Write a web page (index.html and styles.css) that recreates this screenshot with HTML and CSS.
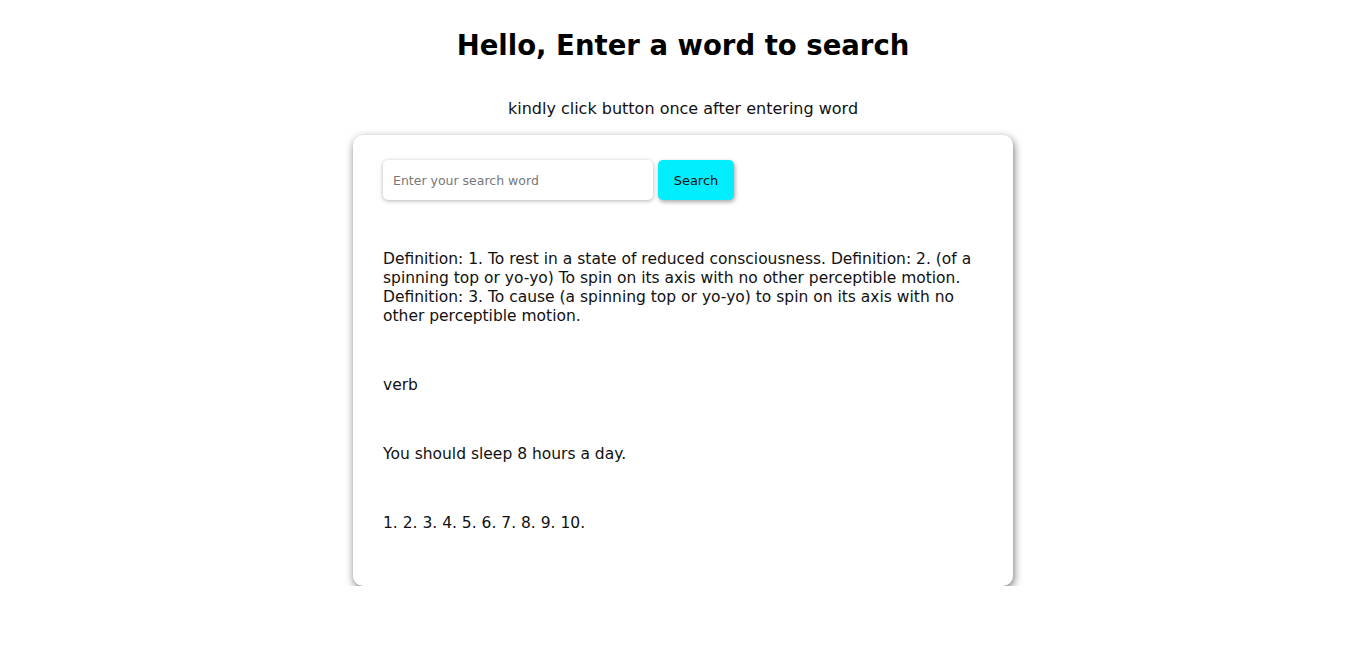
FILE: index.html
```html
<!DOCTYPE html>
<html>
<head>
<meta charset="utf-8">
<link rel="stylesheet" href="styles.css">
</head>
<body>
<h1 class="title">Hello, Enter a word to search</h1>
<p class="hint">kindly click button once after entering word</p>
<div class="card">
  <div class="search-row">
    <input class="search-input" type="text" placeholder="Enter your search word">
    <button class="search-btn">Search</button>
  </div>
  <div class="results">
    <p class="result">Definition: 1. To rest in a state of reduced consciousness. Definition: 2. (of a spinning top or yo-yo) To spin on its axis with no other perceptible motion. Definition: 3. To cause (a spinning top or yo-yo) to spin on its axis with no other perceptible motion.</p>
    <p class="result">verb</p>
    <p class="result">You should sleep 8 hours a day.</p>
    <p class="result">1. 2. 3. 4. 5. 6. 7. 8. 9. 10.</p>
  </div>
</div>
</body>
</html>
```
FILE: styles.css
```css
html, body {
  margin: 0;
  padding: 0;
  background: #ffffff;
}
body {
  font-family: "DejaVu Sans", sans-serif;
  color: #111;
  display: flex;
  flex-direction: column;
  align-items: center;
}
.title {
  font-size: 27.5px;
  font-weight: bold;
  margin: 26px 0 0;
  line-height: 38px;
  color: #000;
}
.hint {
  font-size: 16px;
  margin: 35px 0 0;
  line-height: 20px;
}
.card {
  width: 660px;
  box-sizing: border-box;
  margin-top: 16px;
  padding: 25px 30px 53px;
  border-radius: 10px;
  background: #fff;
  box-shadow: 1px 3px 8px rgba(0, 0, 0, 0.55);
}
.search-row {
  display: flex;
  gap: 5px;
}
.search-input {
  width: 270px;
  height: 40px;
  box-sizing: border-box;
  border: none;
  border-radius: 5px;
  padding: 0 10px;
  font-family: inherit;
  font-size: 12.5px;
  box-shadow: 0 1px 4px rgba(0, 0, 0, 0.3);
  outline: none;
}
.search-input::placeholder {
  color: #777;
}
.search-btn {
  width: 76px;
  height: 40px;
  border: none;
  border-radius: 5px;
  background: #00eefd;
  font-family: inherit;
  font-size: 13px;
  color: #111;
  box-shadow: 1px 2px 4px rgba(0, 0, 0, 0.35);
}
.results {
  margin-top: 50px;
  display: flex;
  flex-direction: column;
  gap: 50px;
}
.result {
  margin: 0;
  font-size: 15.5px;
  line-height: 19px;
}
```
